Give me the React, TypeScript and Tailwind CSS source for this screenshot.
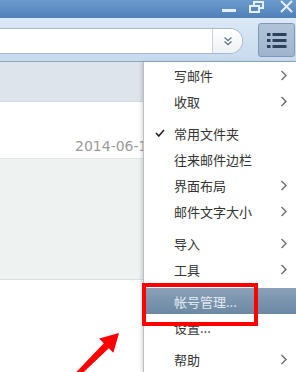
import React from "react";

const Chevron = () => (
  <svg width="8" height="11" viewBox="0 0 8 11" className="block">
    <path d="M1.5 1 L6 5.5 L1.5 10" fill="none" stroke="#6b6b6b" strokeWidth="1.4" />
  </svg>
);

type Item = { label: string; arrow?: boolean; check?: boolean; active?: boolean } | "sep";

const items: Item[] = [
  { label: "写邮件", arrow: true },
  { label: "收取", arrow: true },
  "sep",
  { label: "常用文件夹", check: true },
  { label: "往来邮件边栏" },
  { label: "界面布局", arrow: true },
  { label: "邮件文字大小", arrow: true },
  "sep",
  { label: "导入", arrow: true },
  { label: "工具", arrow: true },
  "sep",
  { label: "帐号管理...", active: true },
  { label: "设置..." },
  "sep",
  { label: "帮助", arrow: true },
];

export default function App() {
  return (
    <div
      className="relative w-[296px] h-[372px] overflow-hidden bg-white flex flex-col"
      style={{ fontFamily: '"Noto Sans CJK SC", "Noto Sans", sans-serif' }}
    >
      {/* Title bar */}
      <div className="h-[18px] shrink-0 bg-gradient-to-b from-[#6c9bcd] to-[#4f80b9] flex items-start justify-end">
        <svg width="296" height="18" viewBox="0 0 296 18" className="block">
          <rect x="222" y="9" width="14" height="3" fill="#e6eef7" />
          <rect x="254" y="2" width="9" height="6" fill="none" stroke="#e6eef7" strokeWidth="2" />
          <rect x="250" y="6" width="9" height="6" fill="#5a8bc1" stroke="#e6eef7" strokeWidth="2" />
          <path d="M281 1 L292 12 M292 1 L281 12" stroke="#e6eef7" strokeWidth="2" />
        </svg>
      </div>

      {/* Toolbar */}
      <div className="h-[44px] shrink-0 bg-gradient-to-b from-[#dce9f6] to-[#c7daee] border-b border-[#8fa7c1] flex items-center">
        <div className="w-[243px] h-[26px] mt-[2px] bg-white border border-l-0 border-[#a9b9ca] rounded-r-[13px] flex justify-end overflow-hidden">
          <div className="w-[30px] h-full border-l border-[#c9d3dd] bg-gradient-to-b from-[#ffffff] to-[#eef2f6] flex items-center justify-center">
            <svg width="10" height="10" viewBox="0 0 10 10">
              <path d="M1.5 1.5 L5 4.5 L8.5 1.5 M1.5 5.5 L5 8.5 L8.5 5.5" fill="none" stroke="#6d7a88" strokeWidth="1.4" />
            </svg>
          </div>
        </div>
        <div className="ml-[15px] w-[37px] h-[34px] mt-[1px] rounded-[3px] border border-[#8199b5] bg-gradient-to-b from-[#b0c3d8] to-[#9fb5cd] flex items-center justify-center">
          <svg width="20" height="15" viewBox="0 0 20 15">
            <rect x="0" y="0" width="3.5" height="3" fill="#2d415c" />
            <rect x="5.5" y="0" width="14" height="3" fill="#2d415c" />
            <rect x="0" y="6" width="3.5" height="3" fill="#2d415c" />
            <rect x="5.5" y="6" width="14" height="3" fill="#2d415c" />
            <rect x="0" y="12" width="3.5" height="3" fill="#2d415c" />
            <rect x="5.5" y="12" width="14" height="3" fill="#2d415c" />
          </svg>
        </div>
      </div>

      {/* Left list */}
      <div className="flex-1 flex flex-col">
        <div className="h-[40px] bg-[#dde4ec] border-b border-[#d0d8e2]" />
        <div className="h-[57px] bg-white border-b border-[#dfe3e6] relative">
          <div
            className="pl-[75px] pt-[37px] text-[14px] leading-[14px] text-[#9a9a9a]"
            style={{ fontFamily: '"DejaVu Sans", sans-serif' }}
          >
            2014-06-12
          </div>
        </div>
        <div className="h-[121px] bg-[#eef2f1] border-b border-[#dadfe0]" />
        <div className="flex-1 bg-white" />
      </div>

      {/* Dropdown menu */}
      <div className="absolute left-[143px] top-[62px] w-[153px] bottom-0 bg-white border-l border-[#b9bec4] shadow-[-2px_0_3px_rgba(0,0,0,0.12)] flex flex-col">
        {items.map((it, i) =>
          it === "sep" ? (
            <div key={i} className="h-px bg-[#e2e2e2] mt-[3px] mb-[3px]" />
          ) : (
            <div
              key={i}
              className={
                "h-[26px] shrink-0 flex items-center text-[13px] " +
                (it.active
                  ? "bg-gradient-to-b from-[#8aa1b8] to-[#6c88a3] text-[#e3eaf1]"
                  : "text-[#333333]")
              }
            >
              <div className="w-[30px] flex justify-center pl-[2px]">
                {it.check && (
                  <svg width="10" height="8" viewBox="0 0 10 8">
                    <path d="M1 4 L3.8 7 L9 1" fill="none" stroke="#222" strokeWidth="1.6" />
                  </svg>
                )}
              </div>
              <div className="flex-1 leading-[13px]">{it.label}</div>
              <div className="w-[16px] flex justify-start">{it.arrow && <Chevron />}</div>
            </div>
          )
        )}
      </div>

      {/* Red highlight box */}
      <div className="absolute left-[142px] top-[283px] w-[116px] h-[43px] border-[4px] border-[#ff0000]" />

      {/* Red arrow */}
      <svg className="absolute left-0 top-0" width="296" height="372" viewBox="0 0 296 372">
        <polygon
          points="119,333 113.4,352.8 108.8,348.2 79.8,375.8 76.2,372.2 103.8,343.2 99.2,338.6"
          fill="#ff0000"
        />
      </svg>
    </div>
  );
}
